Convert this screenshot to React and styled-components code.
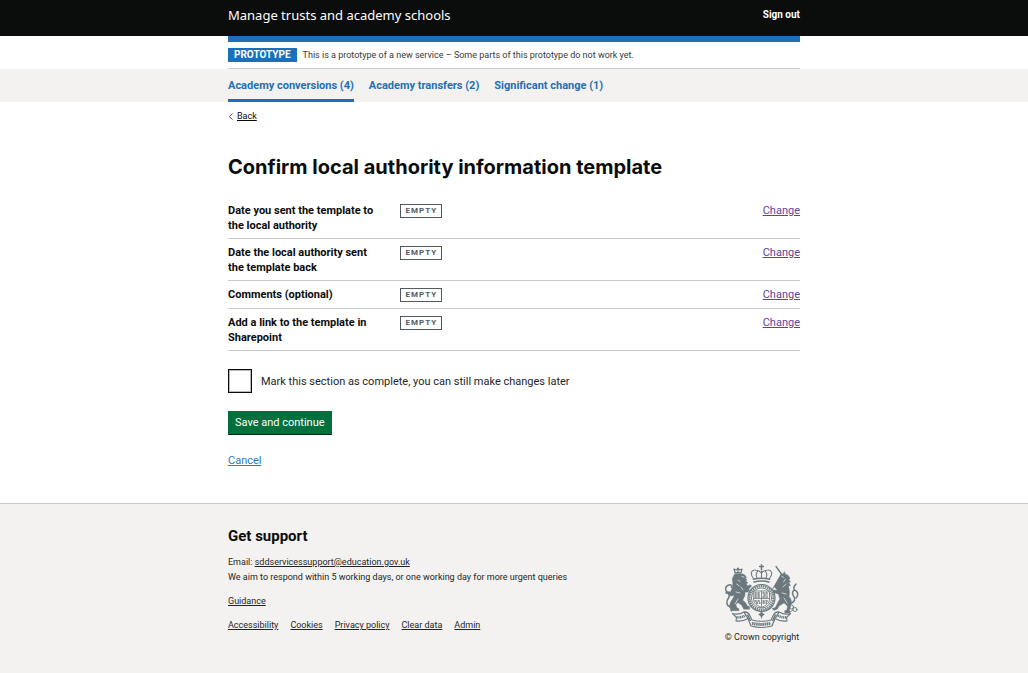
import React from 'react';
import styled, { createGlobalStyle } from 'styled-components';

const GlobalStyle = createGlobalStyle`
  *, *::before, *::after { box-sizing: border-box; }
  html { background: #f3f2f1; }
  body {
    margin: 0;
    background: #fff;
    color: #0b0c0c;
    font: 400 11px/15px Roboto, "Liberation Sans", sans-serif;
  }
  a { color: inherit; text-underline-offset: 1px; }
`;

const Container = styled.div`
  max-width: 572px;
  margin: 0 auto;
`;

const Gutter = styled.div`
  padding: 0 16px;
  background: ${(p) => p.$fill || 'transparent'};
`;

const HeaderBar = styled(Container)`
  display: flex;
  align-items: center;
  justify-content: space-between;
  height: 36px;
  padding-bottom: 7px;
`;

const ServiceName = styled.a`
  color: #fff;
  font: 400 13px/18px "Noto Sans", sans-serif;
  text-decoration: none;
`;

const SignOut = styled.a`
  color: #fff;
  font-size: 10px;
  font-weight: 700;
  text-decoration: none;
`;

const PhaseBanner = styled(Container)`
  display: flex;
  align-items: center;
  gap: 6px;
  border-top: 6px solid #1d70b8;
  border-bottom: 1px solid #c8cacb;
  padding: 6px 0;
  font-size: 9px;
  line-height: 14px;
`;

const PhaseTag = styled.strong`
  padding: 0 6px;
  background: #1d70b8;
  color: #fff;
  font-size: 10px;
  line-height: 14px;
`;

const PhaseText = styled.span`
  color: #383a3a;
`;

const NavList = styled(Container).attrs({ as: 'nav' })`
  display: flex;
  gap: 15px;
`;

const NavLink = styled.a`
  padding: 9px 0 6px;
  border-bottom: 3px solid ${(p) => (p.$current ? '#1d70b8' : 'transparent')};
  color: #1d70b8;
  font-size: 11px;
  font-weight: 700;
  text-decoration: none;
`;

const BackLink = styled.a`
  display: inline-flex;
  align-items: center;
  gap: 3px;
  margin-top: 7px;
  font-size: 9px;
  text-decoration: none;

  span { text-decoration: underline; }
`;

const Title = styled.h1`
  margin: 28px 0 16px;
  font: 700 20px/28px Inter, Roboto, sans-serif;
`;

const SummaryTable = styled.table`
  width: 100%;
  border-collapse: collapse;
  table-layout: fixed;

  th, td {
    padding: 6px 0 5px;
    border-bottom: 1px solid #c8cacb;
    text-align: left;
    vertical-align: top;
  }
  th { width: 30%; padding-right: 20px; }
  td:last-child { width: 20%; text-align: right; }
`;

const EmptyTag = styled.strong`
  display: block;
  width: fit-content;
  margin: 1px 0;
  padding: 0 4px 0 5px;
  border: 1px solid #505a5f;
  color: #505a5f;
  font-size: 8px;
  line-height: 12px;
  letter-spacing: 1px;
`;

const ChangeLink = styled.a`
  color: #5f4399;
`;

const CheckRow = styled.div`
  display: flex;
  align-items: center;
  gap: 9px;
  margin: 18px 0;
  color: #242626;
`;

const Checkbox = styled.input`
  appearance: none;
  flex: none;
  width: 24px;
  height: 24px;
  margin: 0;
  border: 1px solid #0b0c0c;
  box-shadow: inset 0 0 0 1px #b5b6b6;
  outline-offset: 2px;
  &:checked { background: #0b0c0c; box-shadow: inset 0 0 0 4px #fff; }
`;

const SaveButton = styled.button`
  display: block;
  height: 24px;
  padding: 0 7px;
  border: 0;
  border-bottom: 1px solid #002d18;
  background: #00703c;
  color: #fff;
  font: inherit;
  cursor: pointer;
`;

const CancelLink = styled.a`
  display: inline-block;
  margin: 18px 0 35px;
  color: #2f7bbd;
`;

const FooterBand = styled.footer`
  padding: 23px 16px 28px;
  border-top: 1px solid #c8cacb;
  background: #f3f2f1;
`;

const FooterBody = styled(Container)`
  display: flex;
  align-items: flex-end;
  justify-content: space-between;
  color: #242626;
  font-size: 9px;
`;

const SupportTitle = styled.h2`
  margin: 0 0 10px;
  color: #0b0c0c;
  font-size: 15px;
  line-height: 18px;
`;

const FooterText = styled.p`
  margin: 0 0 9px;
`;

const FooterLinks = styled.nav`
  display: flex;
  gap: 12px;
  margin-bottom: 12px;
`;

const Copyright = styled.a`
  display: flex;
  flex-direction: column;
  align-items: center;
  gap: 1px;
  text-decoration: none;
`;

function Chevron() {
  return (
    <svg width="6" height="9" viewBox="0 0 6 9" aria-hidden="true">
      <path d="M4.6 1.4 1.4 4.5 4.6 7.6" fill="none" stroke="#505a5f" strokeWidth="1" />
    </svg>
  );
}

function Crest() {
  return (
    <svg width="76" height="65" viewBox="0 0 76 65" fill="#6b797e" stroke="#6b797e" strokeLinecap="round" strokeLinejoin="round" aria-hidden="true">
      {/* crown */}
      <g fill="none" strokeWidth="1.1">
        <path d="M37.500 .8v5M35.600 2.600h3.800" strokeWidth="1.500" />
        <path d="M29.500 14.500c-4-5-2-9 2-8.500 3 .3 5 1.600 6 3 1-1.400 3-2.700 6-3 4-.5 6 3.500 2 8.500" />
        <path d="M33 14c-1.500-3-.5-5.500.5-6.500M42 14c1.500-3 .5-5.500-.5-6.500M37.500 7v7" strokeDasharray="1 .7" />
        <path d="M29.500 15.300q8-2 16 0M30 18q7.500-2 15 0" strokeWidth="1.500" />
      </g>
      {/* lion */}
      <path fill="none" strokeWidth="1.200" d="M11 8.500 10 5l2.500 1L14 4l1.500 2L18 5l-1 3.500zM14 4v4" />
      <path strokeWidth=".4" d="M11 9.500h6c3 .3 4.500 1.800 5.500 4l-1.300.8 2 1.500-1.600.9 2.400 2.200-1.700.7 1.200 2.400 2.500-1.300 1.800 1.300-3.300 3.200 1.500 1.200-2.800 1.800-2-.3-.3 3.600-2.200 4.700c2.500 1.500 3.500 3 4.500 5.500l2.500 1v2.500h-6l-2-4-4-2.800-1.800 2.300 1 3 2 1v2H8.500L7 47.500 5.500 42c.5-4.500 3.500-7 4.800-10.500l-3.800.6-2-2-3-.7.600-2 4.400.3 1.700-3.400.6-5-.6-4.500z" />
      <path fill="none" strokeWidth="1.500" d="M7 43C1.500 42 2.500 36.500 4.500 34c1.500-2.500 1-4-1-5.500C.5 26 1 22 5 21c2-.5 3 .5 2.500 2.500" />
      <path fill="none" stroke="#f3f2f1" strokeWidth=".7" d="M18 12.500l2 .5M14 16l2 1.500M12.500 20l3 2M17 23l2 3M12 28l4 1M14 35l-3 5" />
      {/* unicorn */}
      <path fill="none" strokeWidth="1.300" d="m52 2.500 5.500 7.500" />
      <path strokeWidth=".4" d="m56.500 10.500 3-1 .8-2 1 2.500c2.700.7 4.200 2.500 4.700 5l-1.300.5 1.800 2.500-1.800.5 1.800 3-2 .5c1 4.500 1.500 7 .5 10.500 2 2 3 4.500 2 8l-1.500 5.500.5 3h-5l-.5-2 2.500-1.300.5-4-3.500-2.700-5 3-1.500 3-3.500 1.500-2-2 3.300-1 2.500-5 2-3.500-1.500-5-3.500-1-3.500.5-.5-2 3-1.500 4 .5-3.500-3.500-.5.3-2 4.200.3 4 2.700.3-4.500-4.300.8-1.200-1.500 3.200-3.800z" />
      <path fill="none" strokeWidth="1.500" d="M66 40c4.500-2 6-5 3.500-8-1.800-3-1-5 1-6-1.500-2 0-4.500 1.500-6M70.500 26c3.500 1 4.500 5 1.500 8" />
      <g fill="none" strokeWidth=".9">
        <path d="M53 26q5 3 9 0" />
        <circle cx="67.500" cy="43" r="2" />
        <circle cx="71" cy="45.500" r="2" />
        <path d="M63 41.500q2 0 2.500 1.500M69 46q-2 3-5 1" />
      </g>
      <path fill="none" stroke="#f3f2f1" strokeWidth=".7" d="M58 12.500l1.500.7M61.500 15l-2 3M62 20l-3 3M58 29l4 1M60 34l3 5" />
      {/* garter and shield */}
      <circle cx="37.500" cy="34" r="13.500" fill="#f3f2f1" strokeWidth="1.200" />
      <circle cx="37.500" cy="34" r="11.900" fill="none" strokeWidth="2" strokeDasharray="1.500 .7" strokeLinecap="butt" />
      <circle cx="37.500" cy="34" r="10.100" fill="none" strokeWidth=".9" />
      <path fill="none" strokeWidth=".8" d="M29.500 27h16v8c0 4.500-4 6.800-8 8.500-4-1.700-8-4-8-8.500zM37.500 27v16M29.500 34.500h16" />
      <path fill="none" strokeWidth="1.300" strokeDasharray="2.200 .8" strokeLinecap="butt" d="M30.500 29h6M30.500 31h6M30.500 33h6M30.500 37h6M32 39h4.500M38.500 29h6M39.500 31h4M38.500 33h6M38.500 37h6M38.500 39h4.500" />
      {/* pendant */}
      <path fill="none" strokeWidth="1" d="M37.500 48v6M35 50.500h5" />
      <circle cx="37.500" cy="50.500" r="1.800" />
      {/* motto ribbon */}
      <path fill="#f3f2f1" strokeWidth="1.100" d="M8.500 49.500c4 1.200 7.500.8 11.500-1.500l4 6.500c-4 2.500-8 3-12 2.500l.5-3.500zM66.500 49.500c-4 1.200-7.500.8-11.500-1.500l-4 6.500c4 2.500 8 3 12 2.500l-.5-3.500z" />
      <path fill="#f3f2f1" strokeWidth="1.200" d="M20 48c2.500-.3 4.500 1 5.500 3l2.500 5q9.500 2.500 19 0l2.500-5c1-2 3-3.300 5.500-3l-4 6.500-3 7.500q-10.500 3-21 0l-3-7.500z" />
      <g fill="none" strokeWidth="2.500" strokeLinecap="butt">
        <path d="M12.500 53.300q4.500.5 8.500-1.700" strokeDasharray="1.200 .6" />
        <path d="M54 51.600q4 2.200 8.500 1.700" strokeDasharray="1.200 .6" />
        <path d="M28 59.200q9.500 2.400 19 0" strokeDasharray="1.500 .6" strokeWidth="3" />
        <path d="M23.500 50.500l3 6.500M51.500 50.500l-3 6.500" strokeWidth="1.500" />
      </g>
    </svg>
  );
}

const navItems = ['Academy conversions (4)', 'Academy transfers (2)', 'Significant change (1)'];
const rows = [
  'Date you sent the template to the local authority',
  'Date the local authority sent the template back',
  'Comments (optional)',
  'Add a link to the template in Sharepoint',
];
const footerLinks = ['Accessibility', 'Cookies', 'Privacy policy', 'Clear data', 'Admin'];

export default function App() {
  return (
    <>
      <GlobalStyle />
      <Gutter as="header" $fill="#0b0c0c">
        <HeaderBar>
          <ServiceName href="#">Manage trusts and academy schools</ServiceName>
          <SignOut href="#">Sign out</SignOut>
        </HeaderBar>
      </Gutter>
      <Gutter>
        <PhaseBanner>
          <PhaseTag>PROTOTYPE</PhaseTag>
          <PhaseText>This is a prototype of a new service – Some parts of this prototype do not work yet.</PhaseText>
        </PhaseBanner>
      </Gutter>
      <Gutter $fill="#f3f2f1">
        <NavList>
          {navItems.map((label, i) => (
            <NavLink key={label} href="#" $current={i === 0}>{label}</NavLink>
          ))}
        </NavList>
      </Gutter>
      <Gutter as="main">
        <Container>
          <BackLink href="#"><Chevron /><span>Back</span></BackLink>
          <Title>Confirm local authority information template</Title>
          <SummaryTable>
            <tbody>
              {rows.map((label) => (
                <tr key={label}>
                  <th scope="row">{label}</th>
                  <td><EmptyTag>EMPTY</EmptyTag></td>
                  <td><ChangeLink href="#">Change</ChangeLink></td>
                </tr>
              ))}
            </tbody>
          </SummaryTable>
          <CheckRow>
            <Checkbox type="checkbox" id="complete" />
            <label htmlFor="complete">Mark this section as complete, you can still make changes later</label>
          </CheckRow>
          <SaveButton type="button">Save and continue</SaveButton>
          <CancelLink href="#">Cancel</CancelLink>
        </Container>
      </Gutter>
      <FooterBand>
        <FooterBody>
          <div>
            <SupportTitle>Get support</SupportTitle>
            <FooterText>
              Email: <a href="mailto:sddservicessupport@education.gov.uk">sddservicessupport@education.gov.uk</a>
              <br />
              We aim to respond within 5 working days, or one working day for more urgent queries
            </FooterText>
            <FooterText><a href="#">Guidance</a></FooterText>
            <FooterLinks>
              {footerLinks.map((label) => <a key={label} href="#">{label}</a>)}
            </FooterLinks>
          </div>
          <Copyright href="#"><Crest />© Crown copyright</Copyright>
        </FooterBody>
      </FooterBand>
    </>
  );
}
